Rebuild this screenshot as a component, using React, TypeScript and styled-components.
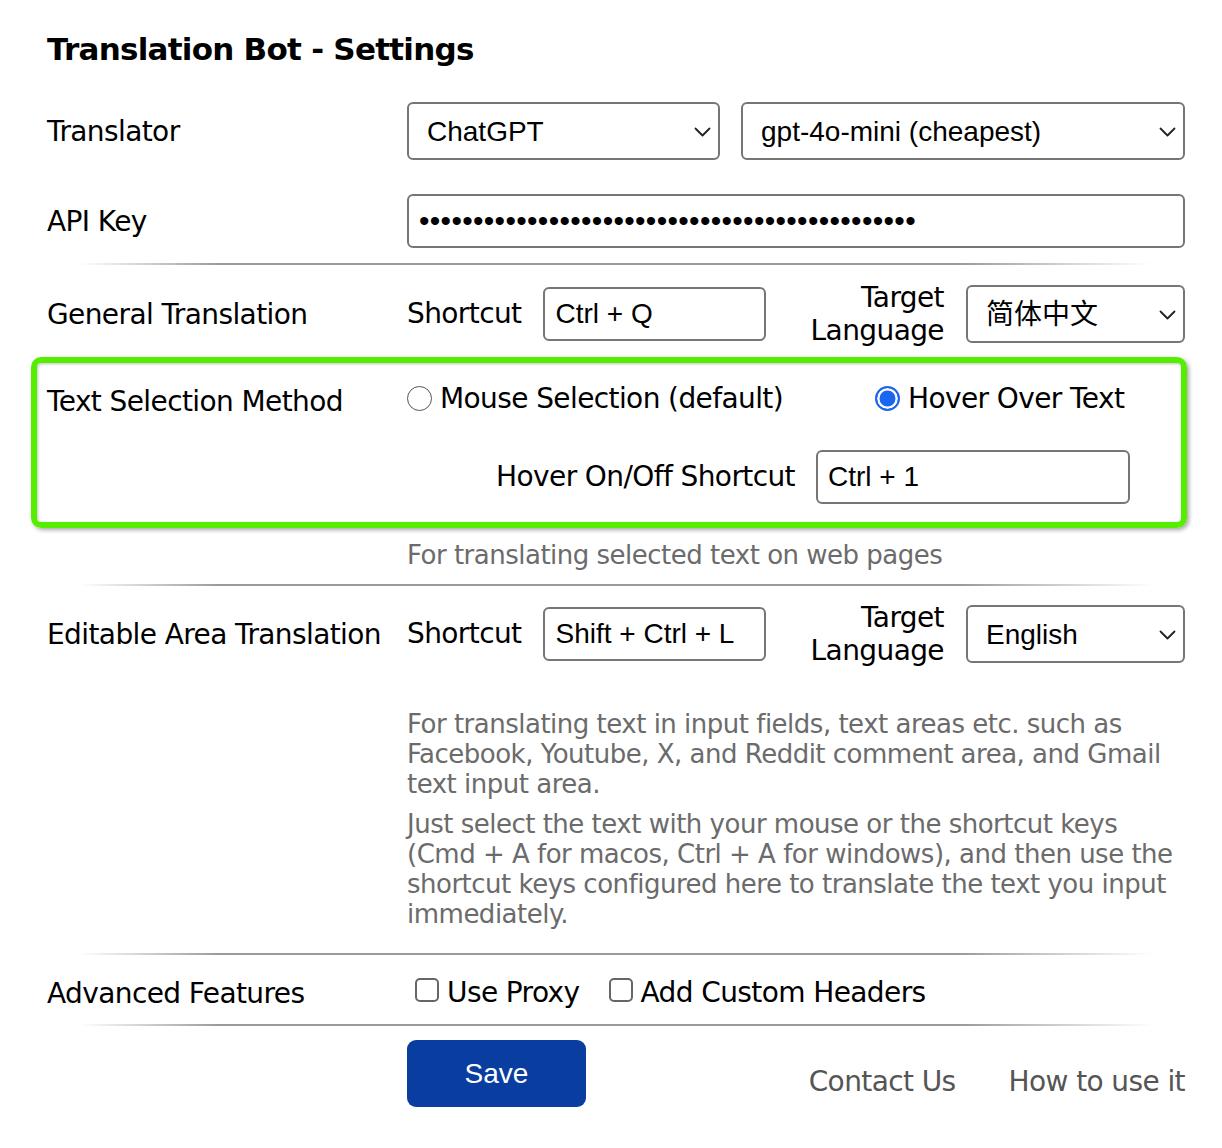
import React from "react";
import styled, { createGlobalStyle } from "styled-components";

const Global = createGlobalStyle`
  html, body { margin: 0; padding: 0; background: #fff; }
  body { font-family: "DejaVu Sans", Verdana, sans-serif; color: #000; }
  * { box-sizing: border-box; }
`;

const Page = styled.div`
  width: 1222px;
  padding: 29px 37px 40px 47px;
`;

const Title = styled.h1`
  margin: 0 0 33px 0;
  font-size: 31px;
  line-height: 40px;
  font-weight: bold;
  letter-spacing: -0.75px;
`;

const Row = styled.div<{ $mt?: number; $h?: number }>`
  display: grid;
  grid-template-columns: 360px 1fr;
  align-items: center;
  margin-top: ${(p) => p.$mt ?? 0}px;
  min-height: ${(p) => p.$h ?? 0}px;
`;

const Label = styled.div`
  font-size: 28px;
  letter-spacing: -0.6px;
  line-height: 34px;
  padding-top: 2px;
`;

const Controls = styled.div<{ $gap?: number }>`
  display: flex;
  align-items: center;
  gap: ${(p) => p.$gap ?? 22}px;
`;

const SelectWrap = styled.div<{ $w?: number; $grow?: boolean }>`
  position: relative;
  width: ${(p) => (p.$w ? `${p.$w}px` : "auto")};
  flex: ${(p) => (p.$grow ? "1" : "none")};
`;

const NativeSelect = styled.select`
  appearance: none;
  -webkit-appearance: none;
  display: block;
  width: 100%;
  height: 58px;
  border: 2px solid #767676;
  border-radius: 6px;
  background: #fff;
  padding: 0 44px 0 18px;
  font-family: "Liberation Sans", Arial, "Noto Sans CJK SC", sans-serif;
  font-size: 28px;
  color: #000;
  outline: none;
`;

const Chevron = styled.svg`
  position: absolute;
  right: 9px;
  top: 50%;
  margin-top: -4px;
  pointer-events: none;
`;

const TextInput = styled.input<{ $w?: number; $h?: number }>`
  display: block;
  width: ${(p) => (p.$w ? `${p.$w}px` : "100%")};
  height: ${(p) => p.$h ?? 54}px;
  border: 2px solid #767676;
  border-radius: 6px;
  padding: 0 10px;
  font-family: "Liberation Sans", Arial, sans-serif;
  font-size: 28px;
  color: #000;
  background: #fff;
  outline: none;
`;

const PasswordInput = styled(TextInput)`
  font-size: 30px;
  letter-spacing: 0.3px;
`;

const InlineLabel = styled.span`
  font-size: 28px;
  letter-spacing: -0.6px;
  line-height: 34px;
  white-space: nowrap;
`;

const TargetLabel = styled.div`
  flex: 1;
  text-align: right;
  font-size: 28px;
  letter-spacing: -0.6px;
  line-height: 33px;
`;

const Divider = styled.div<{ $mt: number }>`
  height: 2px;
  margin: ${(p) => p.$mt}px 33px 0 33px;
  background: linear-gradient(
    to right,
    rgba(150, 150, 150, 0),
    #9a9a9a 13%,
    #9a9a9a 82%,
    rgba(150, 150, 150, 0)
  );
`;

const HighlightBox = styled.div`
  margin: 10px -2px 0 -16px;
  border: 6px solid #56ee00;
  border-radius: 10px;
  padding: 20px 51px 18px 10px;
  box-shadow: 2px 2px 4px rgba(0, 0, 0, 0.35), inset 1px 1px 3px rgba(0, 0, 0, 0.25);
`;

const BoxGrid = styled.div`
  display: grid;
  grid-template-columns: 360px 1fr;
  row-gap: 31px;
`;

const RadioGroup = styled.div`
  display: flex;
  align-items: center;
  position: relative;
  top: -2px;
`;

const Option = styled.label<{ $w?: number }>`
  display: flex;
  align-items: center;
  gap: 8px;
  width: ${(p) => (p.$w ? `${p.$w}px` : "auto")};
  font-size: 28px;
  letter-spacing: -0.6px;
  line-height: 34px;
  white-space: nowrap;
`;

const Radio = styled.input`
  appearance: none;
  -webkit-appearance: none;
  margin: 0;
  width: 25px;
  height: 25px;
  flex: none;
  border-radius: 50%;
  border: 1.5px solid #555;
  background: #fff;
  position: relative;
  top: -1px;
  &:checked {
    border: 2px solid #1a66f0;
    background: #1a66f0;
    box-shadow: inset 0 0 0 2.5px #fff;
  }
`;

const Checkbox = styled.input`
  appearance: none;
  -webkit-appearance: none;
  margin: 0;
  width: 24px;
  height: 24px;
  flex: none;
  border-radius: 5px;
  border: 2px solid #666;
  background: #fff;
  position: relative;
  top: -3px;
`;

const HoverRow = styled.div`
  grid-column: 2;
  display: flex;
  justify-content: flex-end;
  align-items: center;
  gap: 21px;
`;

const Hint = styled.div<{ $mt?: number }>`
  grid-column: 2;
  margin-top: ${(p) => p.$mt ?? 0}px;
  font-size: 26px;
  letter-spacing: -0.5px;
  line-height: 30px;
  color: #6b6b6b;
`;

const HintBlock = styled.div<{ $mt?: number }>`
  display: grid;
  grid-template-columns: 360px 1fr;
  margin-top: ${(p) => p.$mt ?? 0}px;
`;

const CheckGroup = styled.div`
  display: flex;
  align-items: center;
  gap: 29px;
  padding-left: 8px;
`;

const Footer = styled.div`
  display: grid;
  grid-template-columns: 360px 1fr;
  margin-top: 14px;
`;

const FooterControls = styled.div`
  display: flex;
  align-items: flex-end;
`;

const SaveButton = styled.button`
  width: 179px;
  height: 67px;
  border: none;
  border-radius: 9px;
  background: #0a3da0;
  color: #fff;
  font-family: "Liberation Sans", Arial, sans-serif;
  font-size: 28px;
  cursor: pointer;
`;

const Links = styled.div`
  margin-left: auto;
  display: flex;
  gap: 53px;
  margin-bottom: 8px;
`;

const FooterLink = styled.a`
  font-size: 28px;
  letter-spacing: -0.6px;
  line-height: 34px;
  color: #555;
  text-decoration: none;
`;

function Select({ value, options, width, grow }: { value: string; options: string[]; width?: number; grow?: boolean }) {
  return (
    <SelectWrap $w={width} $grow={grow}>
      <NativeSelect defaultValue={value}>
        {options.map((o) => (
          <option key={o} value={o}>
            {o}
          </option>
        ))}
      </NativeSelect>
      <Chevron width="17" height="10" viewBox="0 0 17 10">
        <path d="M1.5 1.5 L8.5 8.5 L15.5 1.5" fill="none" stroke="#222" strokeWidth="1.8" strokeLinecap="round" strokeLinejoin="round" />
      </Chevron>
    </SelectWrap>
  );
}

export default function App() {
  return (
    <>
      <Global />
      <Page>
        <Title>Translation Bot - Settings</Title>

        <Row>
          <Label>Translator</Label>
          <Controls $gap={21}>
            <Select value="ChatGPT" options={["ChatGPT", "Google", "DeepL"]} width={313} />
            <Select value="gpt-4o-mini (cheapest)" options={["gpt-4o-mini (cheapest)", "gpt-4o"]} grow />
          </Controls>
        </Row>

        <Row $mt={34}>
          <Label>API Key</Label>
          <PasswordInput type="password" defaultValue={"x".repeat(46)} />
        </Row>

        <Divider $mt={15} />

        <Row $mt={16}>
          <Label>General Translation</Label>
          <Controls>
            <InlineLabel>Shortcut</InlineLabel>
            <TextInput $w={223} defaultValue="Ctrl + Q" />
            <TargetLabel>
              Target
              <br />
              Language
            </TargetLabel>
            <Select value="简体中文" options={["简体中文", "English"]} width={219} />
          </Controls>
        </Row>

        <HighlightBox>
          <BoxGrid>
            <Label>Text Selection Method</Label>
            <RadioGroup>
              <Option $w={468}>
                <Radio type="radio" name="method" />
                Mouse Selection (default)
              </Option>
              <Option>
                <Radio type="radio" name="method" defaultChecked />
                Hover Over Text
              </Option>
            </RadioGroup>
            <HoverRow>
              <InlineLabel>Hover On/Off Shortcut</InlineLabel>
              <TextInput $w={314} defaultValue="Ctrl + 1" />
            </HoverRow>
          </BoxGrid>
        </HighlightBox>

        <HintBlock $mt={12}>
          <Hint>For translating selected text on web pages</Hint>
        </HintBlock>

        <Divider $mt={14} />

        <Row $mt={15}>
          <Label>Editable Area Translation</Label>
          <Controls>
            <InlineLabel>Shortcut</InlineLabel>
            <TextInput $w={223} defaultValue="Shift + Ctrl + L" />
            <TargetLabel>
              Target
              <br />
              Language
            </TargetLabel>
            <Select value="English" options={["English", "简体中文"]} width={219} />
          </Controls>
        </Row>

        <HintBlock $mt={42}>
          <Hint>
            For translating text in input fields, text areas etc. such as Facebook, Youtube, X, and Reddit comment area, and Gmail text input area.
          </Hint>
          <Hint $mt={10}>
            Just select the text with your mouse or the shortcut keys (Cmd + A for macos, Ctrl + A for windows), and then use the shortcut keys configured here to translate the text you input immediately.
          </Hint>
        </HintBlock>

        <Divider $mt={24} />

        <Row $mt={20} $h={34}>
          <Label>Advanced Features</Label>
          <CheckGroup>
            <Option>
              <Checkbox type="checkbox" />
              Use Proxy
            </Option>
            <Option>
              <Checkbox type="checkbox" />
              Add Custom Headers
            </Option>
          </CheckGroup>
        </Row>

        <Divider $mt={13} />

        <Footer>
          <div />
          <FooterControls>
            <SaveButton>Save</SaveButton>
            <Links>
              <FooterLink href="#">Contact Us</FooterLink>
              <FooterLink href="#">How to use it</FooterLink>
            </Links>
          </FooterControls>
        </Footer>
      </Page>
    </>
  );
}
